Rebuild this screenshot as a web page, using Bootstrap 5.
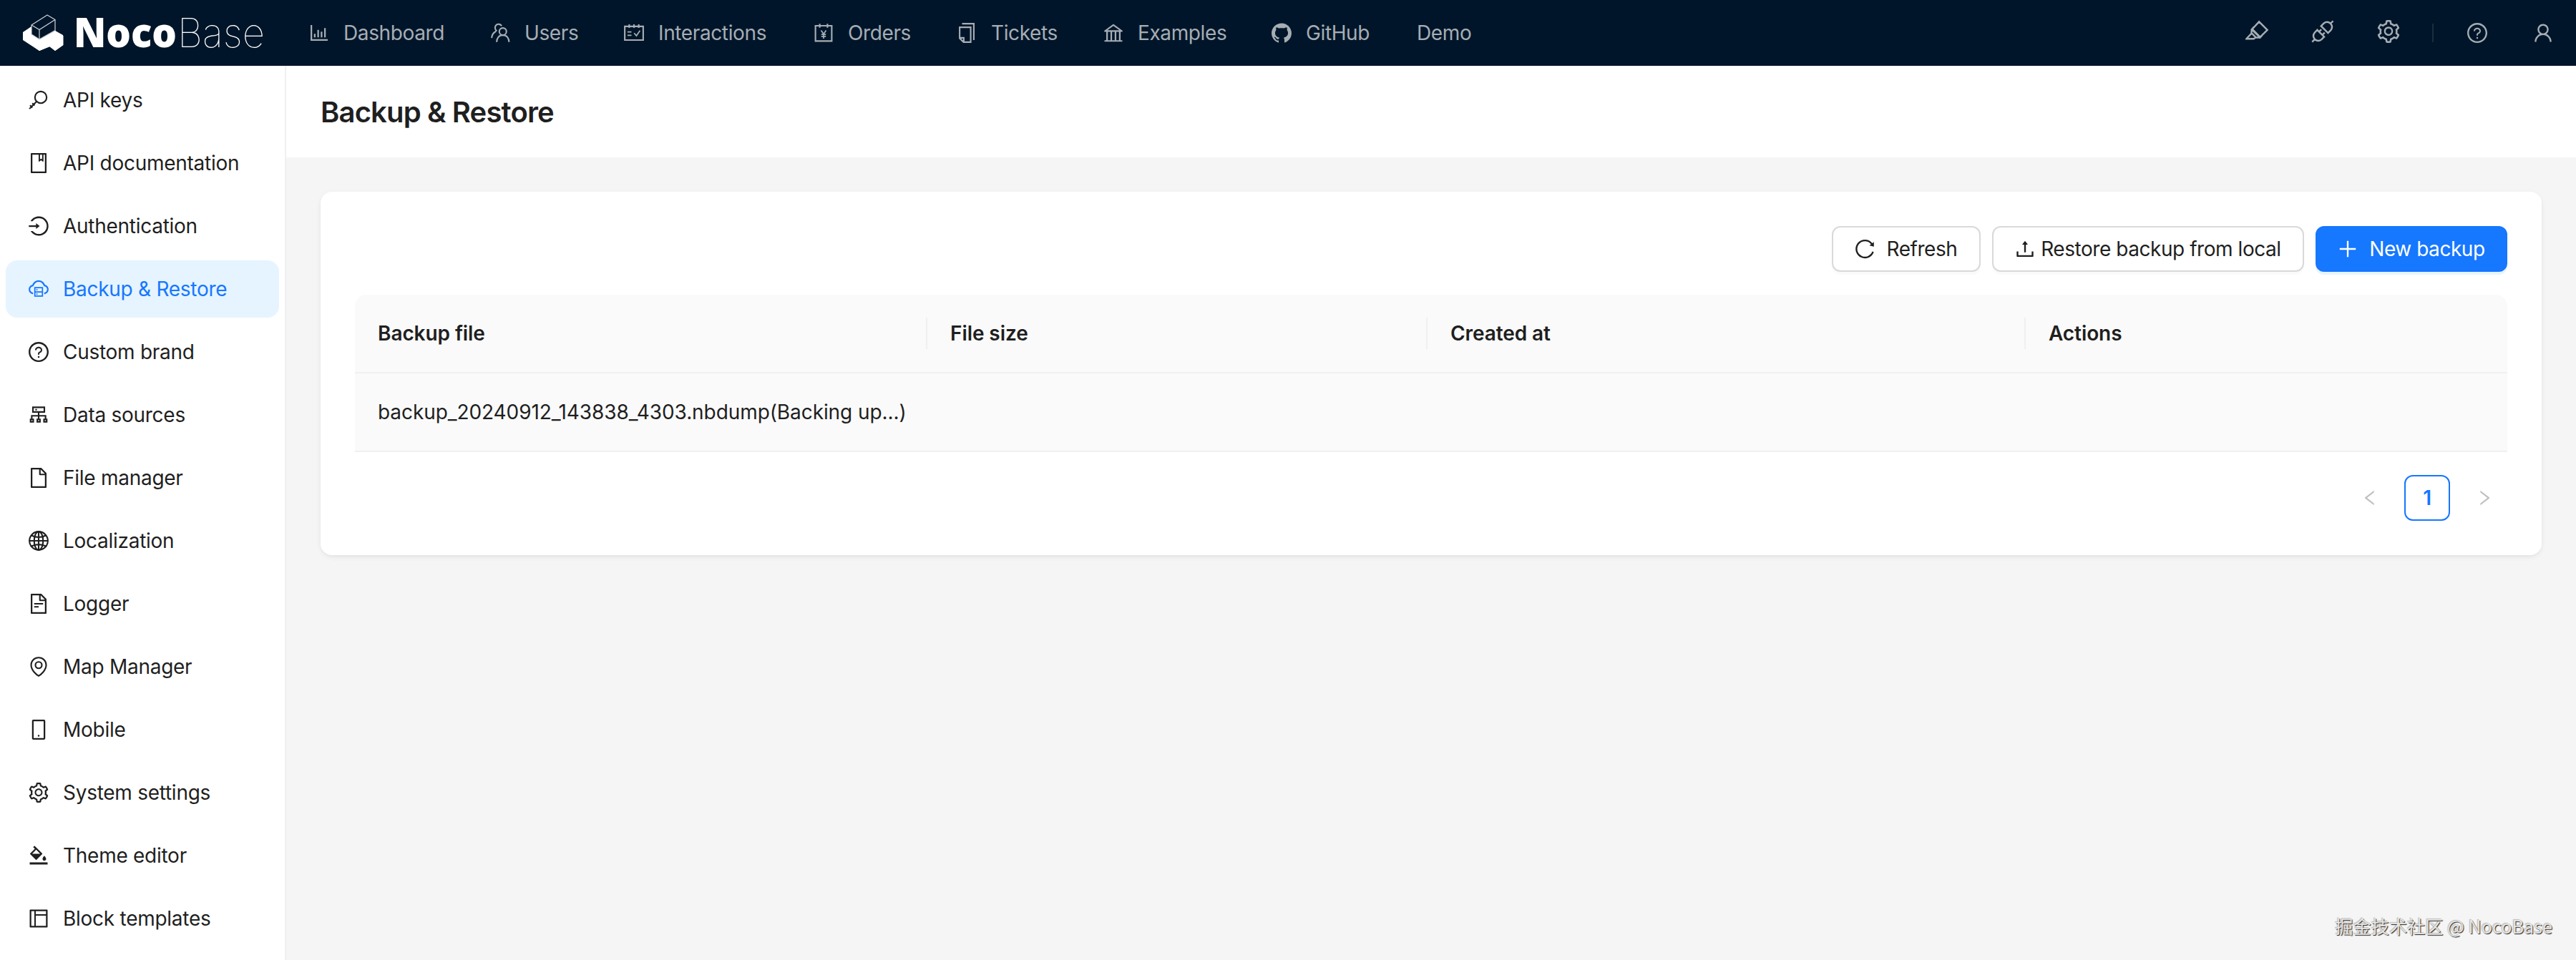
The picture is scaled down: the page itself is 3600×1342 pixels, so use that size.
<!DOCTYPE html>
<html lang="en">
<head>
<meta charset="utf-8">
<title>Backup &amp; Restore - NocoBase</title>
<meta name="viewport" content="width=device-width, initial-scale=1">
<link href="https://cdn.jsdelivr.net/npm/bootstrap@5.3.0/dist/css/bootstrap.min.css" rel="stylesheet">
<style>
  body { font-family: Inter, "Liberation Sans", "Noto Sans CJK SC", sans-serif; font-size: 28px; line-height: 44px; color: #1f1f1f; background: #f5f5f5; letter-spacing: -.27px; }
  .shell { height: 1342px; }
  .ico { width: 28px; height: 28px; fill: currentColor; flex: none; display: block; }
  .ico .ln { fill: none; stroke: currentColor; stroke-width: 68; }
  .topbar { height: 92px; background: #001529; color: #a6adb4; }
  .brand-logo { width: 400px; height: 92px; flex: none; }
  .topmenu a, .sidemenu a { color: inherit; text-decoration: none; white-space: nowrap; }
  .topmenu a { display: flex; align-items: center; gap: 20px; padding-left: 32px; letter-spacing: -.38px; }
  .topmenu a:nth-child(1) { width: 253px; }
  .topmenu a:nth-child(2) { width: 187px; }
  .topmenu a:nth-child(3) { width: 265px; }
  .topmenu a:nth-child(4) { width: 200px; }
  .topmenu a:nth-child(5) { width: 205px; }
  .topmenu a:nth-child(6) { width: 235px; }
  .topmenu a:nth-child(7) { width: 203px; }
  .tools { padding-right: 32px; }
  .tools .big { width: 32px; height: 32px; margin-right: 60px; margin-top: -4px; }
  .tools .big.last { margin-right: 45px; }
  .tools .rule { width: 2px; height: 26px; background: #1b2d3f; margin-right: 47px; }
  .tools .help { margin-right: 64px; }
  .sidemenu { width: 400px; border-right: 2px solid #f0f0f0; padding: 8px; gap: 8px; overflow: hidden; }
  .sidemenu a { width: 382px; height: 80px; flex: none; border-radius: 16px; padding-left: 32px; gap: 20px; display: flex; align-items: center; }
  .sidemenu a.active { background: #e6f4ff; color: #1677ff; }
  .page-title { height: 128px; padding: 1px 48px 0; font-size: 40px; font-weight: 600; letter-spacing: -.85px; margin: 0; }
  .panel { margin: 48px; padding: 48px; border-radius: 16px; border: 0; box-shadow: 0 2px 4px rgba(0,0,0,.03), 0 2px 12px -2px rgba(0,0,0,.05), 0 4px 8px rgba(0,0,0,.02); }
  .act { height: 64px; border-radius: 12px; font-size: 28px; line-height: 44px; padding: 0 30px; border: 2px solid #d9d9d9; color: #1f1f1f; background: #fff; display: flex; align-items: center; justify-content: center; box-shadow: 0 4px 0 rgba(0,0,0,.02); letter-spacing: -.45px; white-space: nowrap; }
  .act.primary { background: #1677ff; border-color: #1677ff; color: #fff; box-shadow: 0 4px 0 rgba(5,145,255,.1); }
  .w-refresh { width: 208px; } .w-restore { width: 436px; } .w-new { width: 268px; }
  .files { table-layout: fixed; margin: 0; border-collapse: separate; border-spacing: 0; letter-spacing: -.08px; }
  .files th, .files td { background: #fafafa; height: 110px; padding: 0 32px; border-bottom: 2px solid #f0f0f0; vertical-align: middle; color: #1f1f1f; white-space: nowrap; }
  .files th { font-weight: 600; position: relative; }
  .files th:first-child { border-top-left-radius: 16px; }
  .files th:last-child { border-top-right-radius: 16px; }
  .files th:not(:last-child)::after { content: ""; position: absolute; right: 0; top: 32px; width: 2px; height: 44px; background: #f0f0f0; }
  .pager { gap: 16px; }
  .pager span { width: 64px; height: 64px; display: flex; align-items: center; justify-content: center; color: #bfbfbf; }
  .pager span.on { border: 2px solid #1677ff; border-radius: 12px; color: #1677ff; font-weight: 600; }
  .pager .ico { width: 24px; height: 24px; }
  .stamp { position: absolute; right: 33px; bottom: 30px; font: 25.2px/36px "Noto Sans CJK SC", sans-serif; letter-spacing: 0; color: #e6e6e6; text-shadow: 1px 1px 1px #222, -1px -1px 1px #bbb; white-space: nowrap; }
</style>
</head>
<body>
<div class="shell d-flex flex-column position-relative overflow-hidden">
  <header class="topbar d-flex align-items-stretch">
    <svg class="brand-logo" viewBox="0 0 400 92">
      <path fill="#fff" d="M32 45l12-8v14l11 10 22-18 11 6v14l-11 8-8-6-14 6-23-17z"/>
      <path fill="#fff" d="M32 46l12-9 11 18 22-12 11.500 7v13L77 71l-7-6-15 6-23-15z"/>
      <path fill="#001529" stroke="#cfd5da" stroke-width="1.200" stroke-linejoin="round" d="M44 35l22-14 11 6.500v15L55 55l-11-7z"/>
      <path fill="none" stroke="#cfd5da" stroke-width="1.200" d="M44 35l11 6.500L77 27.500M55 41.500V55"/>
      <g font-family="Open Sans, Noto Sans, sans-serif" font-size="56.500" fill="#fff" letter-spacing="0">
        <text x="103" y="66" font-weight="800" textLength="144" lengthAdjust="spacingAndGlyphs">Noco</text>
        <text x="248" y="66" font-family="Inter" font-weight="100" font-size="56" textLength="122" lengthAdjust="spacingAndGlyphs">Base</text>
      </g>
    </svg>
    <nav class="topmenu d-flex flex-grow-1">
      <a href="#"><svg class="ico" viewBox="64 64 896 896"><path d="M888 792H200V168c0-4.400-3.600-8-8-8h-56c-4.400 0-8 3.600-8 8v688c0 4.400 3.600 8 8 8h752c4.400 0 8-3.600 8-8v-56c0-4.400-3.600-8-8-8zm-600-80h56c4.400 0 8-3.600 8-8V560c0-4.400-3.600-8-8-8h-56c-4.400 0-8 3.600-8 8v144c0 4.400 3.600 8 8 8zm152 0h56c4.400 0 8-3.600 8-8V384c0-4.400-3.600-8-8-8h-56c-4.400 0-8 3.600-8 8v320c0 4.400 3.600 8 8 8zm152 0h56c4.400 0 8-3.600 8-8V462c0-4.400-3.600-8-8-8h-56c-4.400 0-8 3.600-8 8v242c0 4.400 3.600 8 8 8zm152 0h56c4.400 0 8-3.600 8-8V304c0-4.400-3.600-8-8-8h-56c-4.400 0-8 3.600-8 8v400c0 4.400 3.600 8 8 8z"/></svg>Dashboard</a>
      <a href="#"><svg class="ico" viewBox="64 64 896 896"><g class="ln"><circle cx="632" cy="450" r="160"/><path d="M355 922c8-170 100-312 277-312s269 142 277 312M580 200c-50-80-160-105-240-45-75 65-75 180 0 250l-40 50C200 510 140 610 135 740"/></g></svg>Users</a>
      <a href="#"><svg class="ico" viewBox="64 64 896 896"><g class="ln"><path d="M100 220H924V832H100zM300 130V290M512 130V290M724 130V290"/><path stroke-width="56" d="M220 468H400M220 620H400M520 520L620 640L780 410"/></g></svg>Interactions</a>
      <a href="#"><svg class="ico" viewBox="64 64 896 896"><g class="ln"><path d="M148 192H876V876H148zM340 100V280M684 100V280"/><path stroke-width="56" d="M400 400L512 560L624 400M512 560V770M410 580H614M410 670H614"/></g></svg>Orders</a>
      <a href="#"><svg class="ico" viewBox="64 64 896 896"><g class="ln"><path d="M304 100H830V830M196 260H690V924H370L196 750zM196 730H380V920"/></g></svg>Tickets</a>
      <a href="#"><svg class="ico" viewBox="64 64 896 896"><path d="M894 462c30.900 0 43.800-39.700 18.700-58L530.800 126.200a31.810 31.810 0 00-37.600 0L111.300 404c-25.100 18.200-12.200 58 18.800 58H192v374h-72c-4.400 0-8 3.600-8 8v52c0 4.400 3.600 8 8 8h784c4.400 0 8-3.600 8-8v-52c0-4.400-3.600-8-8-8h-72V462h62zM512 196.700l271.100 197.200H240.900L512 196.700zM264 462h117v374H264V462zm189 0h117v374H453V462zm307 374H642V462h118v374z"/></svg>Examples</a>
      <a href="#"><svg class="ico" viewBox="64 64 896 896"><path d="M511.600 76.300C264.300 76.200 64 276.400 64 523.500 64 718.900 189.300 885 363.800 946c23.500 5.900 19.900-10.800 19.900-22.200v-77.500c-135.700 15.900-141.200-73.900-150.300-88.900C215 726 171.500 718 184.500 703c30.900-15.900 62.400 4 98.900 57.900 26.400 39.100 77.900 32.500 104 26 5.700-23.500 17.900-44.500 34.700-60.800-140.600-25.200-199.200-111-199.200-213 0-49.500 16.300-95 48.300-131.700-20.400-60.500 1.900-112.300 4.900-120 58.100-5.200 118.500 41.600 123.200 45.300 33-8.900 70.700-13.600 112.900-13.600 42.400 0 80.200 4.900 113.500 13.900 11.300-8.600 67.300-48.800 121.300-43.900 2.900 7.700 24.700 58.300 5.500 118 32.400 36.800 48.900 82.700 48.900 132.300 0 102.200-59 188.100-200 212.900a127.500 127.500 0 0138.100 91v112.500c.8 9 0 17.900 15 17.900 177.100-59.700 304.600-227 304.600-424.100 0-247.200-200.400-447.300-447.500-447.300z"/></svg>GitHub</a>
      <a href="#">Demo</a>
    </nav>
    <div class="tools d-flex align-items-center">
      <svg class="ico big" viewBox="64 64 896 896"><g class="ln"><path d="M600 130L922 452L640 730L330 420zM400 330L310 430L640 750L720 660M310 430L300 570L480 750L630 750M300 590L100 800H390L470 740"/></g></svg>
      <svg class="ico big" viewBox="64 64 896 896"><g class="ln"><path d="M450 300L560 190Q690 90 820 200Q930 330 830 460L720 570zM830 190L920 100M300 450L570 720L460 830Q330 930 205 820Q95 690 195 560zM195 825L100 920M370 520L460 430M500 650L590 560"/></g></svg>
      <svg class="ico big last" viewBox="64 64 896 896"><path id="gear" d="M924.800 625.700l-65.500-56c3.100-19 4.700-38.400 4.700-57.800s-1.600-38.800-4.700-57.800l65.500-56a32.030 32.030 0 009.300-35.200l-.9-2.600a443.740 443.740 0 00-79.700-137.900l-1.800-2.100a32.120 32.120 0 00-35.100-9.500l-81.300 28.900c-30-24.600-63.500-44-99.700-57.600l-15.700-85a32.050 32.050 0 00-25.800-25.700l-2.700-.5c-52.100-9.400-106.900-9.400-159 0l-2.700.5a32.050 32.050 0 00-25.800 25.700l-15.800 85.400a351.860 351.860 0 00-99 57.400l-81.900-29.100a32 32 0 00-35.100 9.500l-1.800 2.100a446.020 446.020 0 00-79.700 137.900l-.9 2.600c-4.500 12.500-.8 26.500 9.300 35.200l66.300 56.600c-3.100 18.800-4.600 38-4.600 57.100 0 19.200 1.500 38.400 4.600 57.100L99 625.500a32.030 32.030 0 00-9.300 35.200l.9 2.600c18.100 50.400 44.900 96.900 79.700 137.900l1.800 2.100a32.120 32.120 0 0035.100 9.500l81.900-29.100c29.800 24.500 63.100 43.900 99 57.400l15.800 85.400a32.050 32.050 0 0025.800 25.700l2.700.5a449.400 449.400 0 00159 0l2.700-.5a32.050 32.050 0 0025.800-25.700l15.700-85a350 350 0 0099.700-57.600l81.300 28.900a32 32 0 0035.100-9.500l1.800-2.100c34.800-41.100 61.600-87.500 79.700-137.900l.9-2.600c4.500-12.300.8-26.300-9.300-35zM788.300 465.900c2.500 15.100 3.800 30.600 3.800 46.100s-1.300 31-3.800 46.100l-6.600 40.100 74.700 63.900a370.030 370.030 0 01-42.600 73.600L721 702.800l-31.400 25.800c-23.900 19.600-50.500 35-79.300 45.800l-38.100 14.300-17.900 97a377.500 377.500 0 01-85 0l-17.900-97.200-37.800-14.500c-28.500-10.800-55-26.200-78.700-45.700l-31.400-25.900-93.400 33.200c-17-22.900-31.200-47.600-42.600-73.600l75.500-64.500-6.500-40c-2.400-14.900-3.700-30.300-3.700-45.500 0-15.300 1.200-30.600 3.700-45.500l6.500-40-75.500-64.500c11.300-26.100 25.600-50.700 42.600-73.600l93.400 33.200 31.400-25.900c23.700-19.500 50.200-34.900 78.700-45.700l37.900-14.300 17.900-97.200c28.100-3.200 56.800-3.200 85 0l17.900 97 38.100 14.300c28.700 10.800 55.400 26.200 79.300 45.800l31.400 25.800 92.800-32.900c17 22.900 31.200 47.600 42.600 73.600L781.800 426l6.500 39.900zM512 326c-97.200 0-176 78.800-176 176s78.800 176 176 176 176-78.800 176-176-78.800-176-176-176zm79.200 255.200A111.600 111.600 0 01512 614c-29.900 0-58-11.700-79.200-32.800A111.600 111.600 0 01400 502c0-29.900 11.700-58 32.800-79.200C454 401.600 482.100 390 512 390c29.900 0 58 11.600 79.200 32.800A111.600 111.600 0 01624 502c0 29.900-11.700 58-32.800 79.200z"/></svg>
      <span class="rule"></span>
      <svg class="ico help" viewBox="64 64 896 896"><path id="ask" d="M512 64C264.600 64 64 264.600 64 512s200.600 448 448 448 448-200.600 448-448S759.400 64 512 64zm0 820c-205.400 0-372-166.600-372-372s166.600-372 372-372 372 166.600 372 372-166.600 372-372 372zM623.600 316.700C593.600 290.400 554 276 512 276s-81.600 14.500-111.600 40.700C369.200 344 352 380.700 352 420v7.600c0 4.400 3.600 8 8 8h48c4.400 0 8-3.600 8-8V420c0-44.100 43.100-80 96-80s96 35.900 96 80c0 31.100-22 59.600-56.100 72.700-21.200 8.100-39.200 22.300-52.100 40.900-13.100 19-19.900 41.800-19.900 64.900V620c0 4.400 3.600 8 8 8h48c4.400 0 8-3.600 8-8v-22.700a48.300 48.300 0 0130.900-44.800c59-22.700 97.100-74.700 97.100-132.500.1-39.300-17.100-76-48.300-103.300zM472 732a40 40 0 1080 0 40 40 0 10-80 0z"/></svg>
      <svg class="ico" viewBox="64 64 896 896"><path d="M858.500 763.600a374 374 0 00-80.600-119.500 375.630 375.630 0 00-119.500-80.600c-.4-.2-.8-.3-1.200-.5C719.500 518 760 444.700 760 362c0-137-111-248-248-248S264 225 264 362c0 82.700 40.500 156 102.800 201.100-.4.2-.8.3-1.200.5-44.800 18.900-85 46-119.500 80.600a375.630 375.630 0 00-80.600 119.500A371.700 371.700 0 00136 901.800a8 8 0 008 8.200h60c4.400 0 7.900-3.500 8-7.800 2-77.200 33-149.500 87.800-204.300 56.700-56.700 132-87.900 212.200-87.900s155.500 31.200 212.200 87.900C779 752.700 810 825 812 902.200c.1 4.400 3.600 7.800 8 7.800h60a8 8 0 008-8.200c-1-47.800-10.900-94.300-29.500-138.200zM512 534c-45.900 0-89.100-17.900-121.600-50.400S340 407.900 340 362c0-45.900 17.900-89.100 50.400-121.600S466.100 190 512 190s89.100 17.900 121.600 50.400S684 316.100 684 362c0 45.900-17.900 89.100-50.400 121.600S557.900 534 512 534z"/></svg>
    </div>
  </header>
  <div class="d-flex flex-grow-1 overflow-hidden">
    <aside class="sidemenu bg-white d-flex flex-column flex-shrink-0">
      <a href="#"><svg class="ico" viewBox="64 64 896 896"><g class="ln"><circle cx="608" cy="384" r="262"/><path d="M424 570L100 900M230 650L330 750M130 740L230 850"/></g></svg>API keys</a>
      <a href="#"><svg class="ico" viewBox="64 64 896 896"><path d="M832 64H192c-17.700 0-32 14.300-32 32v832c0 17.700 14.300 32 32 32h640c17.700 0 32-14.300 32-32V96c0-17.700-14.300-32-32-32zm-260 72h96v209.900L621.500 312 572 347.400V136zm220 752H232V136h280v296.900c0 3.300 1 6.600 3 9.300a15.900 15.900 0 0022.300 3.700l83.800-59.900 81.400 59.400c2.700 2 6 3.100 9.400 3.100 8.800 0 16-7.200 16-16V136h64v752z"/></svg>API documentation</a>
      <a href="#"><svg class="ico" viewBox="64 64 896 896"><path d="M521.700 82c-152.500-.4-286.700 78.500-363.400 197.700-3.400 5.300.4 12.300 6.700 12.300h70.300c4.800 0 9.300-2.100 12.300-5.800 7-8.500 14.500-16.700 22.400-24.500 32.600-32.500 70.500-58.100 112.700-75.900 43.600-18.400 90-27.800 137.900-27.800 47.900 0 94.300 9.300 137.900 27.800 42.200 17.800 80.100 43.400 112.700 75.900 32.600 32.500 58.100 70.400 76 112.500C865.700 417.800 875 464.100 875 512c0 47.900-9.400 94.200-27.800 137.800-17.800 42.100-43.400 80-76 112.500s-70.500 58.100-112.700 75.900A352.800 352.800 0 01520.600 866c-47.900 0-94.300-9.400-137.900-27.800A353.840 353.840 0 01270 762.300c-7.900-7.900-15.300-16.100-22.400-24.500-3-3.700-7.600-5.800-12.300-5.800H165c-6.300 0-10.200 7-6.700 12.300C234.900 863.200 368.500 942 520.600 942c236.200 0 428-190.100 430.400-425.600C953.400 277.100 761.300 82.600 521.700 82zM395.020 624v-76h-314c-4.400 0-8-3.600-8-8v-56c0-4.400 3.600-8 8-8h314v-76c0-6.700 7.800-10.500 13-6.300l141.900 112a8 8 0 010 12.600l-141.900 112c-5.200 4.100-13 .4-13-6.300z"/></svg>Authentication</a>
      <a href="#" class="active"><svg class="ico" viewBox="64 64 896 896"><g class="ln"><path d="M260 716Q100 670 100 520Q110 390 252 355Q330 155 512 155T772 355Q914 390 924 520Q924 670 764 716"/><path stroke-width="56" d="M342 450H682V830H342zM342 640H682"/></g><circle cx="436" cy="545" r="32"/><circle cx="436" cy="735" r="32"/></svg>Backup &amp; Restore</a>
      <a href="#"><svg class="ico" viewBox="64 64 896 896"><use href="#ask"/></svg>Custom brand</a>
      <a href="#"><svg class="ico" viewBox="64 64 896 896"><g class="ln"><path d="M256 172H768V380H256zM512 380V700M204 700V550H820V700M152 712H272V820H152zM452 712H572V820H452zM752 712H872V820H752z"/></g><circle cx="400" cy="276" r="38"/></svg>Data sources</a>
      <a href="#"><svg class="ico" viewBox="64 64 896 896"><path id="doc" d="M854.600 288.600L639.400 73.400c-6-6-14.100-9.400-22.600-9.400H192c-17.700 0-32 14.300-32 32v832c0 17.700 14.300 32 32 32h640c17.700 0 32-14.300 32-32V311.300c0-8.500-3.400-16.700-9.400-22.700zM790.200 326H602V137.800L790.200 326zm1.800 562H232V136h302v216a42 42 0 0042 42h216v494z"/></svg>File manager</a>
      <a href="#"><svg class="ico" viewBox="64 64 896 896"><g class="ln"><circle cx="512" cy="512" r="412"/><ellipse cx="512" cy="512" rx="200" ry="412"/><path d="M512 100V924M100 512H924M190 270Q350 350 512 350T834 270M190 754Q350 674 512 674T834 754"/></g></svg>Localization</a>
      <a href="#"><svg class="ico" viewBox="64 64 896 896"><use href="#doc"/><path d="M504 618H320c-4.400 0-8 3.600-8 8v48c0 4.400 3.600 8 8 8h184c4.400 0 8-3.600 8-8v-48c0-4.400-3.600-8-8-8zM312 490v48c0 4.400 3.600 8 8 8h384c4.400 0 8-3.600 8-8v-48c0-4.400-3.600-8-8-8H320c-4.400 0-8 3.600-8 8z"/></svg>Logger</a>
      <a href="#"><svg class="ico" viewBox="64 64 896 896"><g class="ln"><path d="M512 922C440 880 176 690 176 431C176 250 325 103 512 103S848 250 848 431C848 690 584 880 512 922z"/><circle cx="512" cy="439" r="144"/></g></svg>Map Manager</a>
      <a href="#"><svg class="ico" viewBox="64 64 896 896"><path d="M744 62H280c-35.300 0-64 28.700-64 64v768c0 35.300 28.700 64 64 64h464c35.300 0 64-28.700 64-64V126c0-35.300-28.700-64-64-64zm-8 824H288V134h448v752zM472 784a40 40 0 1080 0 40 40 0 10-80 0z"/></svg>Mobile</a>
      <a href="#"><svg class="ico" viewBox="64 64 896 896"><use href="#gear"/></svg>System settings</a>
      <a href="#"><svg class="ico" viewBox="64 64 896 896"><path d="M766.400 744.300c43.700 0 79.400-36.200 79.400-80.500 0-53.500-79.400-140.800-79.400-140.800S687 610.300 687 663.800c0 44.300 35.700 80.500 79.400 80.500zm-377.100-44.100c7.100 7.100 18.600 7.100 25.600 0l256.100-256c7.100-7.100 7.100-18.600 0-25.600l-256-256c-.6-.6-1.300-1.200-2-1.700l-78.200-78.200a9.110 9.110 0 00-12.800 0l-48 48a9.110 9.110 0 000 12.800l67.200 67.200-207.800 207.900c-7.100 7.100-7.100 18.600 0 25.600l255.900 256zm12.900-448.600l178.900 178.900H223.400l178.800-178.900zM904 816H120c-4.400 0-8 3.600-8 8v80c0 4.400 3.600 8 8 8h784c4.400 0 8-3.600 8-8v-80c0-4.400-3.600-8-8-8z"/></svg>Theme editor</a>
      <a href="#"><svg class="ico" viewBox="64 64 896 896"><path d="M880 112H144c-17.700 0-32 14.300-32 32v736c0 17.700 14.300 32 32 32h736c17.700 0 32-14.300 32-32V144c0-17.700-14.300-32-32-32zm-696 72h136v656H184V184zm656 656H384V384h456v456zM384 320V184h456v136H384z"/></svg>Block templates</a>
    </aside>
    <main class="flex-grow-1">
      <h1 class="page-title bg-white d-flex align-items-center">Backup &amp; Restore</h1>
      <section class="card panel">
        <div class="d-flex justify-content-end mb-4 pb-2 gap-3">
          <button class="btn act w-refresh" type="button"><svg class="ico me-3" viewBox="64 64 896 896"><path d="M909.100 209.300l-56.400 44.100C775.800 155.100 656.200 92 521.900 92 290 92 102.300 279.500 102 511.500 101.700 743.700 289.800 932 521.900 932c181.300 0 335.800-115 394.600-276.100 1.500-4.200-.7-8.900-4.900-10.300l-56.700-19.500a8 8 0 00-10.100 4.800c-1.800 5-3.800 10-5.900 14.900-17.300 41-42.100 77.800-73.700 109.400A344.770 344.770 0 01655.900 829c-42.300 17.900-87.400 27-133.800 27-46.500 0-91.500-9.100-133.800-27A341.500 341.500 0 01279 755.200a342.160 342.160 0 01-73.700-109.400c-17.900-42.400-27-87.400-27-133.900s9.100-91.500 27-133.900c17.300-41 42.100-77.800 73.700-109.400 31.600-31.600 68.400-56.400 109.300-73.800 42.300-17.900 87.400-27 133.800-27 46.500 0 91.500 9.100 133.800 27a341.500 341.500 0 01109.300 73.800c9.900 9.900 19.200 20.400 27.800 31.400l-60.200 47a8 8 0 003 14.100l175.600 43c5 1.200 9.900-2.600 9.900-7.700l.8-180.900c-.1-6.600-7.800-10.300-13-6.200z"/></svg>Refresh</button>
          <button class="btn act w-restore" type="button"><svg class="ico me-2" viewBox="64 64 896 896"><path d="M400 317.700h73.900V656c0 4.400 3.600 8 8 8h60c4.400 0 8-3.600 8-8V317.700H624c6.700 0 10.400-7.700 6.300-12.900L518.300 163a8 8 0 00-12.600 0l-112 141.700c-4.100 5.300-.4 13 6.300 13zM878 626h-60c-4.400 0-8 3.600-8 8v154H214V634c0-4.400-3.600-8-8-8h-60c-4.400 0-8 3.600-8 8v198c0 17.700 14.300 32 32 32h684c17.700 0 32-14.300 32-32V634c0-4.400-3.600-8-8-8z"/></svg>Restore backup from local</button>
          <button class="btn act primary w-new" type="button"><svg class="ico me-3" viewBox="64 64 896 896"><path d="M482 152h60q8 0 8 8v704q0 8-8 8h-60q-8 0-8-8V160q0-8 8-8zM160 474h704q8 0 8 8v60q0 8-8 8H160q-8 0-8-8v-60q0-8 8-8z"/></svg>New backup</button>
        </div>
        <table class="table files">
          <colgroup><col style="width:800px"><col style="width:699px"><col style="width:836px"><col></colgroup>
          <thead><tr><th>Backup file</th><th>File size</th><th>Created at</th><th>Actions</th></tr></thead>
          <tbody><tr><td>backup_20240912_143838_4303.nbdump(Backing up...)</td><td></td><td></td><td></td></tr></tbody>
        </table>
        <div class="pager d-flex justify-content-end mt-4 pt-2">
          <span><svg class="ico" viewBox="64 64 896 896"><path d="M724 218.300V141c0-6.700-7.700-10.400-12.900-6.300L260.300 486.800a31.860 31.860 0 000 50.300l450.800 352.100c5.300 4.100 12.900.4 12.900-6.300v-77.300c0-4.900-2.300-9.600-6.100-12.600l-360-281 360-281.100c3.800-3 6.100-7.700 6.100-12.600z"/></svg></span>
          <span class="on">1</span>
          <span><svg class="ico" viewBox="64 64 896 896"><path d="M765.700 486.800L314.900 134.700A7.970 7.970 0 00302 141v77.300c0 4.900 2.300 9.600 6.100 12.600l360 281.100-360 281.100c-3.900 3-6.100 7.700-6.100 12.600V883c0 6.700 7.700 10.400 12.900 6.300l450.800-352.100a31.960 31.960 0 000-50.400z"/></svg></span>
        </div>
      </section>
    </main>
  </div>
  <div class="stamp">掘金技术社区 @ NocoBase</div>
</div>
<script src="https://cdn.jsdelivr.net/npm/bootstrap@5.3.0/dist/js/bootstrap.bundle.min.js"></script>
</body>
</html>
